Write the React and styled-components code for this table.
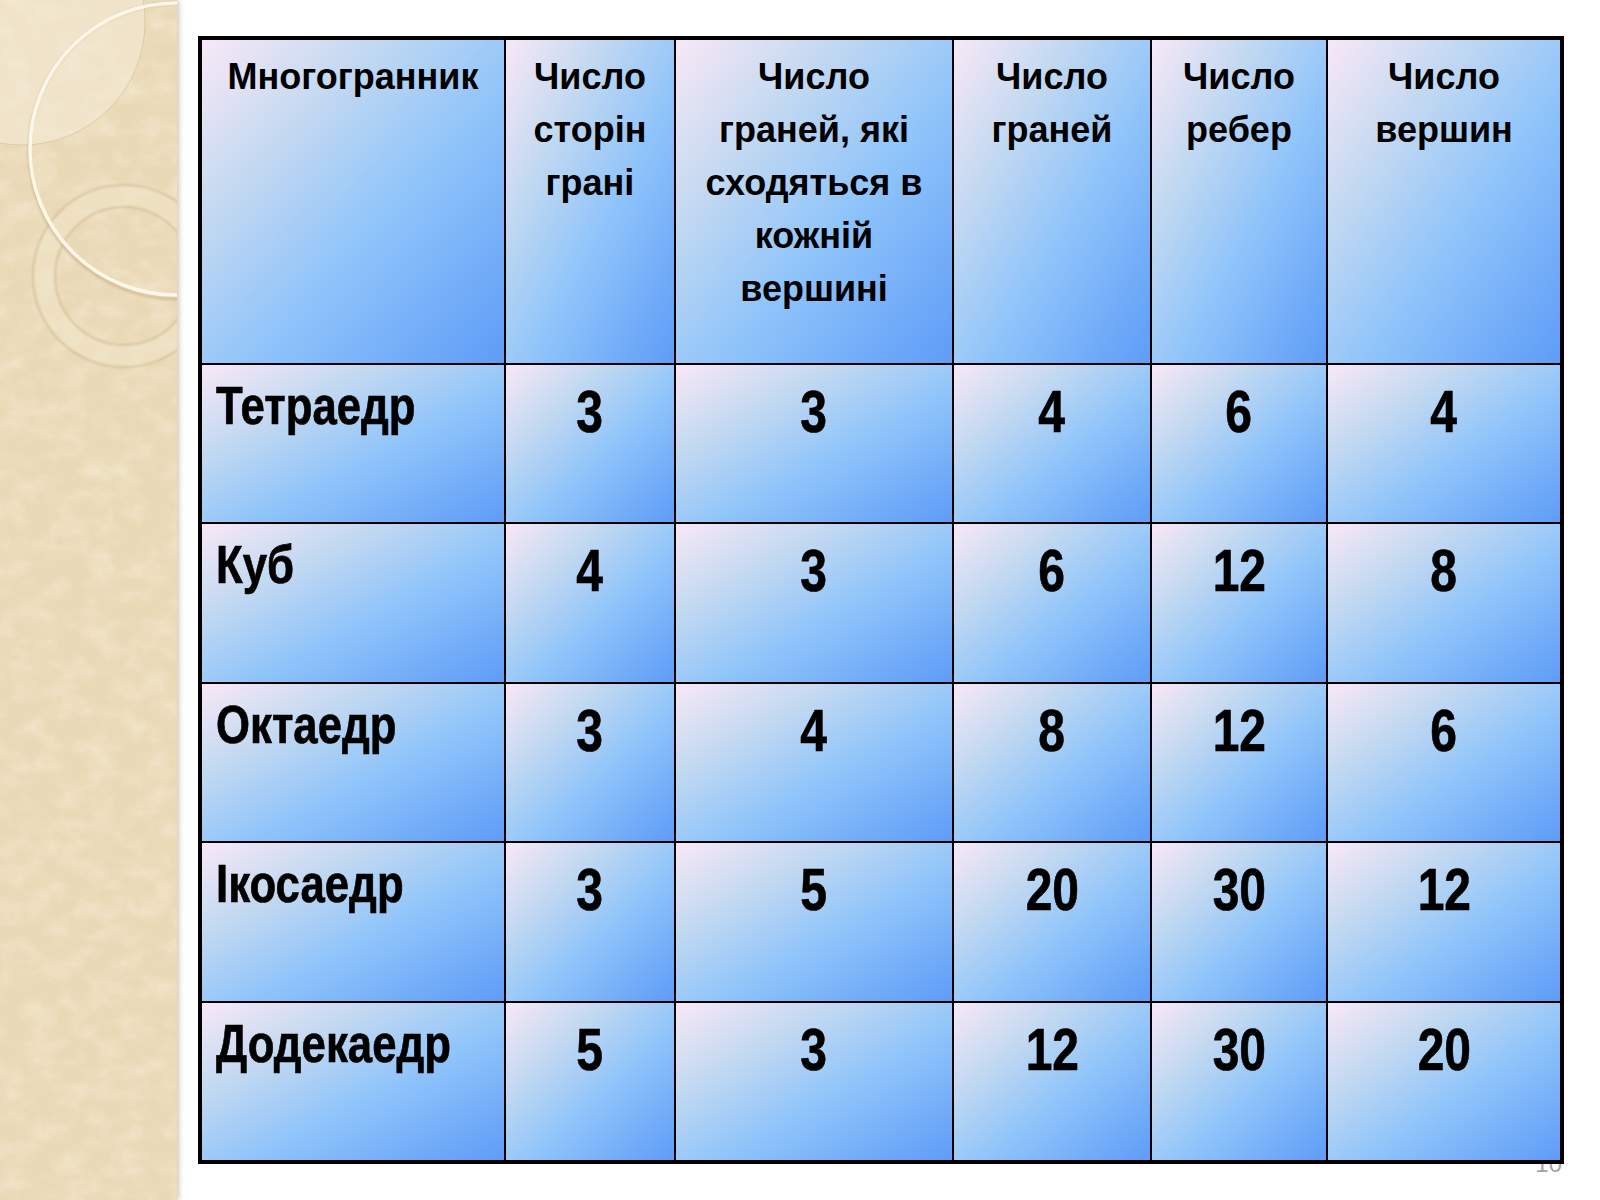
import React from "react";
import styled, { createGlobalStyle } from "styled-components";

const GlobalStyle = createGlobalStyle`
  html, body {
    margin: 0;
    padding: 0;
    background: #ffffff;
  }
  body {
    font-family: "Liberation Sans", Arial, sans-serif;
  }
`;

const headers = [
  "Многогранник",
  "Число\nсторін\nграні",
  "Число\nграней, які\nсходяться в\nкожній\nвершині",
  "Число\nграней",
  "Число\nребер",
  "Число\nвершин",
];

const rows = [
  ["Тетраедр", 3, 3, 4, 6, 4],
  ["Куб", 4, 3, 6, 12, 8],
  ["Октаедр", 3, 4, 8, 12, 6],
  ["Ікосаедр", 3, 5, 20, 30, 12],
  ["Додекаедр", 5, 3, 12, 30, 20],
];

const Slide = styled.div`
  position: relative;
  display: flex;
  width: 1600px;
  height: 1200px;
  overflow: hidden;
  background: #ffffff;
`;

const Sidebar = styled.aside`
  flex: 0 0 177px;
  height: 100%;
  box-shadow: 2px 0 5px rgba(90, 70, 40, 0.3);
  position: relative;
  z-index: 2;

  svg {
    display: block;
  }
`;

const Content = styled.main`
  flex: 1;
  padding: 36px 0 0 21px;
`;

const Grid = styled.div`
  position: relative;
  z-index: 1;
  display: grid;
  grid-template-columns: 302px 168px 276px 196px 174px 232px;
  grid-template-rows: 323px repeat(5, 1fr);
  gap: 2px;
  width: 1366px;
  height: 1128px;
  box-sizing: border-box;
  border: 4px solid #000;
  background: #000;
`;

const Cell = styled.div`
  background: linear-gradient(
    to bottom right,
    #f8e8f6 0%,
    #c4d9f1 28%,
    #8fc4fa 58%,
    #5e9cf7 100%
  );
  color: #000;
  font-weight: bold;
  overflow: hidden;
`;

const HeadCell = styled(Cell)`
  font-size: 36px;
  line-height: 53px;
  text-align: center;
  white-space: pre-line;
  padding: 10px 6px 0;
`;

const NameCell = styled(Cell)`
  font-size: 54px;
  line-height: 54px;
  text-align: left;
  white-space: nowrap;
  padding: 13px 0 0 14px;
`;

const NumCell = styled(Cell)`
  font-size: 60px;
  line-height: 60px;
  text-align: center;
  white-space: nowrap;
  padding-top: 17px;
`;

const Narrow = styled.span`
  display: inline-block;
  transform: scaleX(${(p) => p.$scale || 0.8});
  transform-origin: ${(p) => p.$origin || "center"} top;
  -webkit-text-stroke: 0.7px #000;
`;

const PageNumber = styled.div`
  position: absolute;
  right: 38px;
  top: 1152px;
  z-index: 0;
  font-family: "Liberation Sans", Arial, sans-serif;
  font-size: 24px;
  line-height: 24px;
  color: #a3a3a3;
`;

function Parchment() {
  return (
    <svg width="177" height="1200" viewBox="0 0 177 1200">
      <defs>
        <filter id="mottle" x="0" y="0" width="100%" height="100%">
          <feTurbulence type="fractalNoise" baseFrequency="0.035 0.05" numOctaves="4" seed="7" />
          <feColorMatrix
            type="matrix"
            values="0 0 0 0 0.97
                    0 0 0 0 0.93
                    0 0 0 0 0.84
                    0 0 0 1.1 -0.45"
          />
        </filter>
        <filter id="grain" x="0" y="0" width="100%" height="100%">
          <feTurbulence type="fractalNoise" baseFrequency="0.12 0.16" numOctaves="3" seed="3" />
          <feColorMatrix
            type="matrix"
            values="0 0 0 0 0.80
                    0 0 0 0 0.69
                    0 0 0 0 0.50
                    0 0 0 1.0 -0.45"
          />
        </filter>
        <filter id="soft">
          <feGaussianBlur stdDeviation="1.2" />
        </filter>
      </defs>
      <rect width="177" height="1200" fill="#ead9b6" />
      <rect width="177" height="1200" filter="url(#mottle)" opacity="0.7" />
      <rect width="177" height="1200" filter="url(#grain)" opacity="0.45" />

      <circle cx="22" cy="22" r="123" fill="#f6eedc" opacity="0.5" />
      <circle cx="22" cy="22" r="123" fill="none" stroke="#d6c39b" strokeWidth="1" opacity="0.7" />

      <circle cx="124" cy="276" r="80" fill="none" stroke="#f1e5ca" strokeWidth="22" opacity="0.55" />
      <circle cx="124" cy="276" r="91" fill="none" stroke="#bfa679" strokeWidth="1.5" opacity="0.6" filter="url(#soft)" />
      <circle cx="124" cy="276" r="69" fill="none" stroke="#bfa679" strokeWidth="1.5" opacity="0.6" filter="url(#soft)" />

      <circle cx="177" cy="151" r="148" fill="none" stroke="#b59d72" strokeWidth="3" opacity="0.45" filter="url(#soft)" />
      <circle cx="176" cy="149" r="146" fill="none" stroke="#fcf7e8" strokeWidth="3.5" />
    </svg>
  );
}

export default function App() {
  return (
    <>
      <GlobalStyle />
      <Slide>
        <Sidebar>
          <Parchment />
        </Sidebar>
        <Content>
          <Grid>
            {headers.map((h) => (
              <HeadCell key={h}>{h}</HeadCell>
            ))}
            {rows.map((row) => (
              <React.Fragment key={row[0]}>
                <NameCell>
                  <Narrow $origin="left" $scale={0.81}>{row[0]}</Narrow>
                </NameCell>
                {row.slice(1).map((v, i) => (
                  <NumCell key={i}>
                    <Narrow $scale={0.8}>{v}</Narrow>
                  </NumCell>
                ))}
              </React.Fragment>
            ))}
          </Grid>
        </Content>
        <PageNumber>10</PageNumber>
      </Slide>
    </>
  );
}
